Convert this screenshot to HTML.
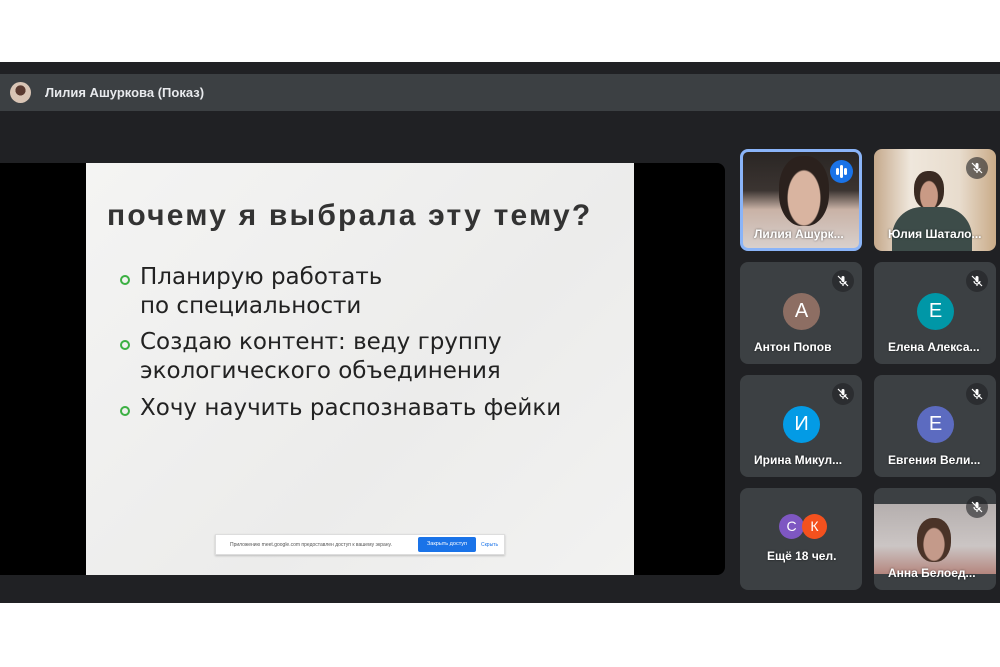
<!DOCTYPE html>
<html><head><meta charset="utf-8"><style>
*{margin:0;padding:0;box-sizing:border-box}
body{width:1000px;height:667px;background:#fff;position:relative;overflow:hidden;font-family:"Liberation Sans",sans-serif}
.dark{position:absolute;left:0;top:62px;width:1000px;height:541px;background:#202124}
.bar{position:absolute;left:0;top:74px;width:1000px;height:37px;background:#3c4043}
.bar .av{position:absolute;left:10px;top:8px;width:21px;height:21px;border-radius:50%;background:radial-gradient(circle at 50% 40%,#5a3a30 0 30%,#d9c5b5 32%)}
.bar .t{position:absolute;left:45px;top:11px;color:#e8eaed;font-size:13px;font-weight:bold}
.stage{position:absolute;left:0;top:163px;width:725px;height:412px;background:#000;border-radius:0 8px 8px 0}
.slide{position:absolute;left:86px;top:163px;width:548px;height:412px;background:linear-gradient(135deg,#f4f4f3,#ececeb 60%,#f2f2f1)}
.h{position:absolute;left:21px;top:36px;font-size:30px;font-weight:bold;color:#333;letter-spacing:2.2px;white-space:nowrap;font-family:"Liberation Sans",sans-serif}
.li{position:absolute;left:54px;font-size:23px;color:#222;line-height:29px;font-family:"DejaVu Sans",sans-serif;white-space:nowrap}
.dot{position:absolute;left:-20px;top:12px;width:10px;height:10px;border:2px solid #3cb043;border-radius:50%}
.note{position:absolute;left:129px;top:371px;width:290px;height:21px;background:#fff;border:1px solid #ddd;box-shadow:0 1px 2px rgba(0,0,0,.2);font-size:5px;color:#555}
.note span{position:absolute;top:7px;white-space:nowrap}
.btn{position:absolute;left:202px;top:2px;width:58px;height:15px;background:#1a73e8;color:#fff;font-size:5.5px;text-align:center;line-height:15px;border-radius:2px}
.tile{position:absolute;width:122px;height:102px;background:#3c4043;border-radius:8px;overflow:hidden}
.nm{position:absolute;left:14px;bottom:10px;color:#fff;font-size:12px;font-weight:bold;text-shadow:0 0 2px rgba(0,0,0,.6);white-space:nowrap}
.circ{position:absolute;left:43px;top:31px;width:37px;height:37px;border-radius:50%;color:#fff;font-size:20px;text-align:center;line-height:37px}
.mic{position:absolute;right:8px;top:8px;width:22px;height:22px;border-radius:50%;background:rgba(32,33,36,.6)}
.mic svg{position:absolute;left:5px;top:5px}
</style></head><body>
<div class="dark"></div>
<div class="bar"><div class="av"></div><div class="t">Лилия Ашуркова (Показ)</div></div>
<div class="stage"></div>
<div class="slide">
<div class="h">почему я выбрала эту тему?</div>
<div class="li" style="top:100px"><div class="dot"></div>Планирую работать<br>по специальности</div>
<div class="li" style="top:165px"><div class="dot"></div>Создаю контент: веду группу<br>экологического объединения</div>
<div class="li" style="top:231px"><div class="dot"></div>Хочу научить распознавать фейки</div>
<div class="note"><span style="left:14px">Приложению meet.google.com предоставлен доступ к вашему экрану.</span><div class="btn">Закрыть доступ</div><span style="left:265px;color:#1a73e8">Скрыть</span></div>
</div>
<svg width="0" height="0" style="position:absolute"><defs><g id="m"><rect x="4.5" y="1" width="3" height="6" rx="1.5" fill="#fff"/><path d="M3 6a3 3 0 0 0 6 0M6 9v2M1 1l10 10" stroke="#fff" stroke-width="1.2" fill="none"/></g></defs></svg>
<div class="tile" style="left:740px;top:149px;background:linear-gradient(180deg,#2a2624,#3b3431 40%,#c9b2a6 60%,#d8d0cc);border:3px solid #8ab4f8">
<div style="position:absolute;left:36px;top:4px;width:50px;height:70px;border-radius:45%;background:radial-gradient(ellipse at 50% 60%,#d9b4a0 0 45%,#2b211d 48%)"></div>
<div style="position:absolute;right:6px;top:8px;width:23px;height:23px;border-radius:50%;background:#1a73e8"><div style="position:absolute;left:6px;top:8px;width:3px;height:7px;background:#fff;border-radius:2px"></div><div style="position:absolute;left:10px;top:5px;width:3px;height:13px;background:#fff;border-radius:2px"></div><div style="position:absolute;left:14px;top:8px;width:3px;height:7px;background:#fff;border-radius:2px"></div></div>
<div class="nm" style="left:11px;bottom:7px">Лилия Ашурк...</div></div>
<div class="tile" style="left:874px;top:149px;background:linear-gradient(90deg,#c5a98c,#efe7dc 30%,#e8dccd 70%,#c9ab88)">
<div style="position:absolute;left:40px;top:22px;width:30px;height:38px;border-radius:45%;background:radial-gradient(ellipse at 50% 65%,#c99a85 0 40%,#3a2a22 44%)"></div>
<div style="position:absolute;left:18px;top:58px;width:80px;height:50px;border-radius:30px 30px 0 0;background:#3d4c49"></div>
<div class="mic"><svg width="12" height="12"><use href="#m"/></svg></div>
<div class="nm">Юлия Шатало...</div></div>
<div class="tile" style="left:740px;top:262px"><div class="mic"><svg width="12" height="12"><use href="#m"/></svg></div><div class="circ" style="background:#8d6e63">А</div><div class="nm">Антон Попов</div></div>
<div class="tile" style="left:874px;top:262px"><div class="mic"><svg width="12" height="12"><use href="#m"/></svg></div><div class="circ" style="background:#0097a7">Е</div><div class="nm">Елена Алекса...</div></div>
<div class="tile" style="left:740px;top:375px"><div class="mic"><svg width="12" height="12"><use href="#m"/></svg></div><div class="circ" style="background:#039be5">И</div><div class="nm">Ирина Микул...</div></div>
<div class="tile" style="left:874px;top:375px"><div class="mic"><svg width="12" height="12"><use href="#m"/></svg></div><div class="circ" style="background:#5c6bc0">Е</div><div class="nm">Евгения Вели...</div></div>
<div class="tile" style="left:740px;top:488px">
<div style="position:absolute;left:39px;top:26px;width:25px;height:25px;border-radius:50%;background:#7e57c2;color:#fff;font-size:14px;text-align:center;line-height:25px">С</div>
<div style="position:absolute;left:62px;top:26px;width:25px;height:25px;border-radius:50%;background:#f4511e;color:#fff;font-size:14px;text-align:center;line-height:25px">К</div>
<div class="nm" style="left:27px;bottom:27px">Ещё 18 чел.</div></div>
<div class="tile" style="left:874px;top:488px;background:#3c4043">
<div style="position:absolute;left:0;top:16px;width:122px;height:70px;background:linear-gradient(180deg,#b5afae,#cbc5c4 60%,#b5867e)"></div>
<div style="position:absolute;left:43px;top:30px;width:34px;height:44px;border-radius:45%;background:radial-gradient(ellipse at 50% 60%,#c49a8a 0 42%,#4a3328 46%)"></div>
<div class="mic"><svg width="12" height="12"><use href="#m"/></svg></div>
<div class="nm">Анна Белоед...</div></div>
</body></html>
